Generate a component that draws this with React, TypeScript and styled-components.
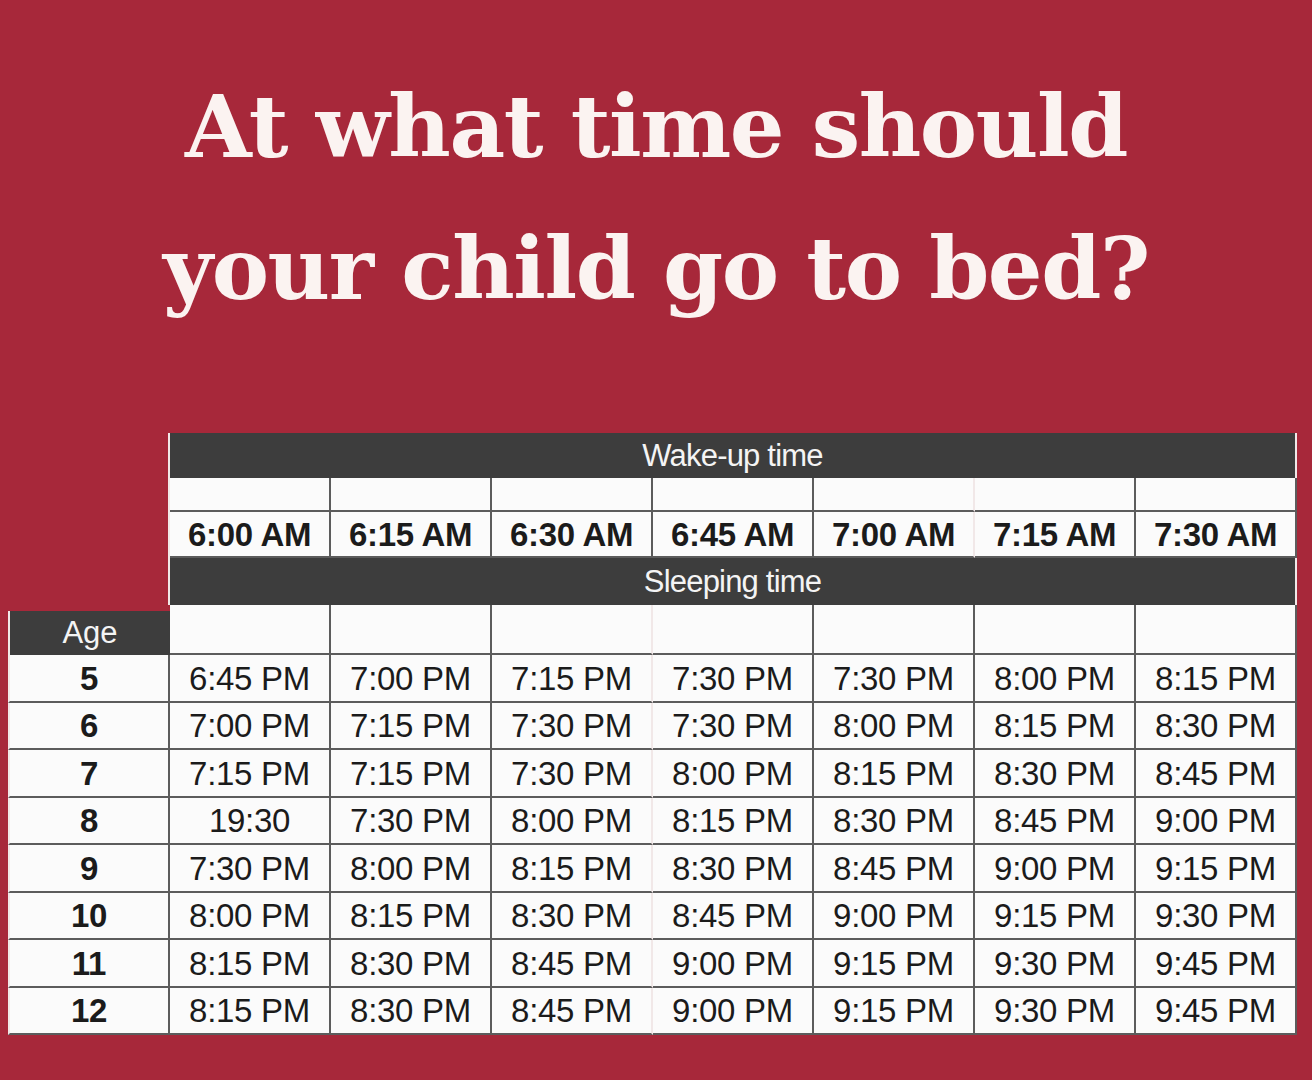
import React from 'react';
import styled, { createGlobalStyle } from 'styled-components';

const GlobalStyle = createGlobalStyle`
	html, body {
		margin: 0;
		padding: 0;
		background: #a7283a;
	}
`;

//#region 
const Page = styled.div`
	width: 1312px;
	height: 1080px;
	overflow: hidden;
	background: #a7283a;

	display: flex;
	flex-direction: column;
	align-items: center;
`;

const Title = styled.h1`
	margin: 56px 0 0 0;
	font-family: "DejaVu Serif", "Liberation Serif", serif;
	font-size: 86px;
	font-weight: 700;
	line-height: 142px;
	letter-spacing: -1.4px;
	text-align: center;
	color: #fbf3f1;
`;

const Table = styled.div`
	margin: 93px 0 0 8px;
	width: 1292px;
	align-self: flex-start;

	display: grid;
	grid-template-columns: 162px repeat(7, 161px);
	grid-template-rows: 45px 34px 46px 47px 50px repeat(8, 47.5px);

	font-family: "Liberation Sans", Arial, sans-serif;
`;

const Gap = styled.div`
	background: transparent;
	border-right: 2px solid #f1e8e8;
`;

const Banner = styled.div`
	grid-column: span 7;
	background: #3d3d3d;
	color: #f4f4f4;
	font-size: 31px;
	letter-spacing: -0.8px;
	display: flex;
	align-items: center;
	justify-content: center;
	border-right: 2px solid #f1e8e8;
`;

const Cell = styled.div<{ $bold?: boolean }>`
	background: #fbfbfb;
	color: #1b1b1b;
	font-size: 33px;
	font-weight: ${props => (props.$bold ? 700 : 400)};
	letter-spacing: -0.3px;
	display: flex;
	align-items: center;
	justify-content: center;
	border-right: 2px solid #5c5c5c;
	border-bottom: 2px solid #5c5c5c;
	box-sizing: border-box;
	padding-top: 2px;

	&:nth-child(8n) {
		border-right: 2px solid #f1e8e8;
	}
`;

const AgeHead = styled.div`
	background: #3d3d3d;
	color: #f4f4f4;
	font-size: 31px;
	display: flex;
	align-items: center;
	justify-content: center;
	margin-top: 6px;
	border-left: 2px solid #f1e8e8;
`;

const AgeCell = styled(Cell)`
	font-weight: 700;
	border-left: 2px solid #f1e8e8;
`;
//#endregion

const wakeTimes = ['6:00 AM', '6:15 AM', '6:30 AM', '6:45 AM', '7:00 AM', '7:15 AM', '7:30 AM'];

const rows: [string, string[]][] = [
	['5', ['6:45 PM', '7:00 PM', '7:15 PM', '7:30 PM', '7:30 PM', '8:00 PM', '8:15 PM']],
	['6', ['7:00 PM', '7:15 PM', '7:30 PM', '7:30 PM', '8:00 PM', '8:15 PM', '8:30 PM']],
	['7', ['7:15 PM', '7:15 PM', '7:30 PM', '8:00 PM', '8:15 PM', '8:30 PM', '8:45 PM']],
	['8', ['19:30', '7:30 PM', '8:00 PM', '8:15 PM', '8:30 PM', '8:45 PM', '9:00 PM']],
	['9', ['7:30 PM', '8:00 PM', '8:15 PM', '8:30 PM', '8:45 PM', '9:00 PM', '9:15 PM']],
	['10', ['8:00 PM', '8:15 PM', '8:30 PM', '8:45 PM', '9:00 PM', '9:15 PM', '9:30 PM']],
	['11', ['8:15 PM', '8:30 PM', '8:45 PM', '9:00 PM', '9:15 PM', '9:30 PM', '9:45 PM']],
	['12', ['8:15 PM', '8:30 PM', '8:45 PM', '9:00 PM', '9:15 PM', '9:30 PM', '9:45 PM']],
];

export default function App() {
	return (
		<Page>
			<GlobalStyle />
			<Title>
				At what time should
				<br />
				your child go to bed?
			</Title>

			<Table>
				<Gap />
				<Banner>Wake-up time</Banner>

				<Gap />
				{wakeTimes.map((t, i) => <Cell key={'e' + i} />)}

				<Gap />
				{wakeTimes.map(t => <Cell key={t} $bold>{t}</Cell>)}

				<Gap />
				<Banner>Sleeping time</Banner>

				<AgeHead>Age</AgeHead>
				{wakeTimes.map((t, i) => <Cell key={'s' + i} />)}

				{rows.map(([age, times]) => (
					<React.Fragment key={age}>
						<AgeCell>{age}</AgeCell>
						{times.map((t, i) => <Cell key={i}>{t}</Cell>)}
					</React.Fragment>
				))}
			</Table>
		</Page>
	);
}
